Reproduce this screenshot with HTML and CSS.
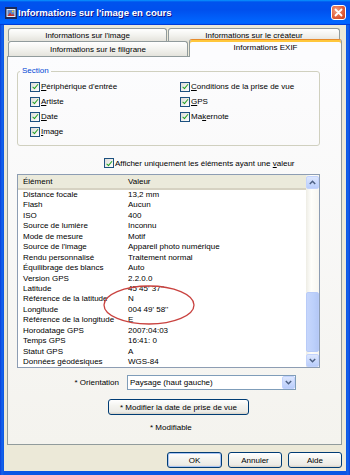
FILE: index.html
```html
<!DOCTYPE html>
<html lang="fr">
<head>
    <meta charset="UTF-8">
    <title>Informations sur l'image en cours</title>
    <link rel="stylesheet" href="styles.css">
</head>
<body>
    <div class="window">
        <!-- barre de titre -->
        <div class="titlebar">
            <svg class="app-icon" width="12" height="12" viewBox="0 0 12 12">
                <rect x="0" y="0" width="12" height="12" fill="#1b2a5a"/>
                <rect x="1.5" y="2" width="9" height="8" fill="#e8eef8"/>
                <rect x="2.5" y="3" width="7" height="6" fill="#5b86c9"/>
                <path d="M2.5 9 L5 5.5 L7 8 L8 6.5 L9.5 9 Z" fill="#c8322a"/>
                <circle cx="7.8" cy="4.4" r="0.9" fill="#f5d23c"/>
            </svg>
            <span class="title">Informations sur l'image en cours</span>
            <div class="close">
                <svg width="13" height="13" viewBox="0 0 13 13">
                    <path d="M3.5 3.5 L9.5 9.5 M9.5 3.5 L3.5 9.5" stroke="#fff" stroke-width="1.8" stroke-linecap="round"/>
                </svg>
            </div>
        </div>

        <div class="client">
            <div class="tab-row row-top">
                <div class="tab tab-image">Informations sur l'image</div>
                <div class="tab tab-creator">Informations sur le créateur</div>
            </div>
            <div class="tab-row row-bottom">
                <div class="tab tab-watermark">Informations sur le filigrane</div>
                <div class="tab tab-exif active">Informations EXIF</div>
            </div>

            <div class="panel">
                <fieldset class="section">
                    <legend>Section</legend>
                    <div class="check-grid">
                        <label class="check"><span class="box"></span><span><u>P</u>ériphérique d'entrée</span></label>
                        <label class="check"><span class="box"></span><span><u>C</u>onditions de la prise de vue</span></label>
                        <label class="check"><span class="box"></span><span><u>A</u>rtiste</span></label>
                        <label class="check"><span class="box"></span><span><u>G</u>PS</span></label>
                        <label class="check"><span class="box"></span><span><u>D</u>ate</span></label>
                        <label class="check"><span class="box"></span><span>Ma<u>k</u>ernote</span></label>
                        <label class="check"><span class="box"></span><span><u>I</u>mage</span></label>
                    </div>
                </fieldset>

                <label class="check only-values"><span class="box"></span><span>Afficher uniquement les éléments ayant une <u>v</u>aleur</span></label>

                <div class="list">
                    <div class="list-main">
                        <div class="list-head"><span>Élément</span><span>Valeur</span></div>
                        <div class="row"><span>Distance focale</span><span>13,2 mm</span></div>
                        <div class="row"><span>Flash</span><span>Aucun</span></div>
                        <div class="row"><span>ISO</span><span>400</span></div>
                        <div class="row"><span>Source de lumière</span><span>Inconnu</span></div>
                        <div class="row"><span>Mode de mesure</span><span>Motif</span></div>
                        <div class="row"><span>Source de l'image</span><span>Appareil photo numérique</span></div>
                        <div class="row"><span>Rendu personnalisé</span><span>Traitement normal</span></div>
                        <div class="row"><span>Équilibrage des blancs</span><span>Auto</span></div>
                        <div class="row"><span>Version GPS</span><span>2.2.0.0</span></div>
                        <div class="row"><span>Latitude</span><span>45 45' 37''</span></div>
                        <div class="row"><span>Référence de la latitude</span><span>N</span></div>
                        <div class="row"><span>Longitude</span><span>004 49' 58''</span></div>
                        <div class="row"><span>Référence de la longitude</span><span>E</span></div>
                        <div class="row"><span>Horodatage GPS</span><span>2007:04:03</span></div>
                        <div class="row"><span>Temps GPS</span><span>16:41: 0</span></div>
                        <div class="row"><span>Statut GPS</span><span>A</span></div>
                        <div class="row"><span>Données géodésiques</span><span>WGS-84</span></div>
                    </div>
                    <div class="scrollbar">
                        <div class="sb-btn">
                            <svg width="7" height="5" viewBox="0 0 7 5"><path d="M0.8 4 L3.5 1.3 L6.2 4" fill="none" stroke="#4d6185" stroke-width="1.5"/></svg>
                        </div>
                        <div class="sb-thumb"></div>
                        <div class="sb-btn">
                            <svg width="7" height="5" viewBox="0 0 7 5"><path d="M0.8 1 L3.5 3.7 L6.2 1" fill="none" stroke="#4d6185" stroke-width="1.5"/></svg>
                        </div>
                    </div>
                    <!-- cercle rouge dessiné par-dessus la liste -->
                    <svg class="mark" width="92" height="40" viewBox="0 0 92 40">
                        <ellipse cx="46" cy="20" rx="45" ry="19" fill="none" stroke="#c9423f" stroke-width="1.3"/>
                    </svg>
                </div>

                <div class="orient">
                    <span class="orient-label">* Orientation</span>
                    <div class="combo">
                        <span>Paysage (haut gauche)</span>
                        <div class="combo-btn">
                            <svg width="7" height="5" viewBox="0 0 7 5"><path d="M0.8 1 L3.5 3.7 L6.2 1" fill="none" stroke="#4d6185" stroke-width="1.5"/></svg>
                        </div>
                    </div>
                </div>

                <div class="btn btn-date">* Modifier la date de prise de vue</div>
                <div class="note">* Modifiable</div>
            </div>

            <div class="actions">
                <div class="btn btn-ok">OK</div>
                <div class="btn btn-cancel">Annuler</div>
                <div class="btn btn-help">Aide</div>
            </div>
        </div>
    </div>
</body>
</html>
```

FILE: styles.css
```css
* {
    box-sizing: border-box;
}
body {
    margin: 0;
    font-family: "Liberation Sans", Arial, sans-serif;
    font-size: 8px;
    color: #000;
}
.window {
    width: 350px;
    height: 475px;
    display: flex;
    flex-direction: column;
    background: linear-gradient(90deg, #0a3fd8, #1464ec 2px, #0a55e4 4px, #0a55e4 346px, #1464ec 348px, #0a3fd8);
}

/* barre de titre */
.titlebar {
    height: 25px;
    display: flex;
    align-items: center;
    padding: 0 4px 0 5px;
    background: linear-gradient(180deg, #0997ff, #0053ee 8%, #0050ee 40%, #06f 88%, #06f 93%, #005bff 95%, #003dd7 96%, #003dd7);
}
.app-icon {
    flex: none;
}
.title {
    flex: 1;
    margin-left: 1px;
    color: #fff;
    font-weight: bold;
    font-size: 9.6px;
    text-shadow: 1px 1px #0f1089;
}
.close {
    width: 15px;
    height: 15px;
    border: 1px solid #fff;
    border-radius: 3px;
    background: radial-gradient(circle at 35% 35%, #f2a184, #e0603c 55%, #c63b18);
    display: flex;
    align-items: center;
    justify-content: center;
}

/* zone cliente */
.client {
    flex: 1;
    margin: 0 4px 4px;
    padding: 3px 4px 3px 3px;
    background: #ece9d8;
    display: flex;
    flex-direction: column;
}
.tab-row {
    display: flex;
    gap: 1px;
    margin-left: 1px;
}
.row-top {
    height: 13px;
}
.row-bottom {
    height: 15px;
    align-items: flex-end;
}
.tab {
    height: 100%;
    border: 1px solid #919b9c;
    border-bottom: none;
    border-radius: 3px 3px 0 0;
    background: linear-gradient(#fff, #f3f3ef 50%, #e4e3dc);
    display: flex;
    align-items: center;
    justify-content: center;
}
.tab-image { width: 159px; }
.tab-creator { width: 172px; }
.tab-watermark { width: 180px; }
.tab-exif { width: 153px; }
.tab.active {
    height: 18px;
    margin-bottom: -1px;
    padding-bottom: 3px;
    border-top: 1px solid #e68b2c;
    box-shadow: inset 0 2px #ffc73c;
    background: #fcfcfe;
    position: relative;
    z-index: 1;
}

.panel {
    flex: 1;
    border: 1px solid #919b9c;
    background: linear-gradient(#fcfcfe, #f4f3ee);
    padding-left: 9px;
}

/* groupe Section */
.section {
    margin: 9px 0 0;
    width: 303px;
    border: 1px solid #d0d0bf;
    border-radius: 3px;
    padding: 3px 0 6px 12px;
}
.section legend {
    margin-left: -10px;
    padding: 0 2px;
    line-height: 10px;
    color: #0046d5;
}
.check-grid {
    display: grid;
    grid-template-columns: 150px 1fr;
    grid-auto-rows: 15px;
}
.check {
    display: flex;
    align-items: center;
}
.box {
    flex: none;
    width: 10px;
    height: 10px;
    margin-right: 1px;
    border: 1px solid #1c5180;
    background: linear-gradient(135deg, #dcdcd7, #fff);
    position: relative;
}
.box::after {
    content: '';
    position: absolute;
    left: 2.5px;
    top: 0.5px;
    width: 2px;
    height: 4.5px;
    border: solid #21a121;
    border-width: 0 1.5px 1.5px 0;
    transform: rotate(40deg);
}
.only-values {
    margin: 10px 0 0 87px;
    height: 14px;
}

/* liste EXIF */
.list {
    margin-top: 4px;
    width: 303px;
    height: 194px;
    border: 1px solid #8d9db3;
    background: #fff;
    display: flex;
    position: relative;
}
.list-main {
    flex: 1;
}
.list-head,
.row {
    display: grid;
    grid-template-columns: 110px 1fr;
}
.list-head span:first-child,
.row span:first-child {
    padding-left: 5px;
    white-space: nowrap;
}
.list-head {
    height: 15px;
    align-items: center;
    background: #ebeadb;
    border-bottom: 2px solid #d6d2c2;
}
.row {
    height: 10.45px;
    line-height: 10.45px;
}
.scrollbar {
    width: 13px;
    display: flex;
    flex-direction: column;
    background: linear-gradient(90deg, #eeede5, #fefefb 40%, #f7f6f1);
}
.sb-btn {
    height: 13px;
    margin-top: 1px;
    border: 1px solid #c3d3fd;
    border-radius: 2px;
    background: linear-gradient(#dde7fe, #b9cdfb);
    display: flex;
    align-items: center;
    justify-content: center;
}
.sb-thumb {
    margin-top: auto;
    margin-bottom: 1px;
    height: 60px;
    border: 1px solid #b8cbf8;
    border-radius: 2px;
    background: linear-gradient(90deg, #c6d6fc, #bcd0fb 60%, #b4c8f6);
}
.mark {
    position: absolute;
    left: 85px;
    top: 110px;
}

/* orientation */
.orient {
    margin-top: 7px;
    height: 15px;
    display: flex;
    align-items: center;
}
.orient-label {
    width: 102px;
    text-align: right;
}
.combo {
    margin-left: 8px;
    width: 169px;
    height: 15px;
    border: 1px solid #7f9db9;
    background: #fff;
    display: flex;
    align-items: center;
    padding: 0 0 0 2px;
}
.combo-btn {
    margin-left: auto;
    width: 13px;
    height: 13px;
    border: 1px solid #c3d3fd;
    border-radius: 2px;
    background: linear-gradient(#dde7fe, #b9cdfb);
    display: flex;
    align-items: center;
    justify-content: center;
}

/* boutons */
.btn {
    height: 16px;
    border: 1px solid #003c74;
    border-radius: 3px;
    background: linear-gradient(180deg, #fff, #f4f4f0 40%, #ecebe6 85%, #d6d0c5);
    display: flex;
    align-items: center;
    justify-content: center;
}
.btn-date {
    margin: 9px 0 0 91px;
    width: 141px;
}
.note {
    margin: 8px 0 0 133px;
    line-height: 10px;
}
.actions {
    margin-top: 7px;
    display: flex;
    justify-content: flex-end;
    gap: 6px;
}
.btn-ok {
    width: 55px;
    box-shadow: inset 0 0 0 1px #aac5f3;
}
.btn-cancel,
.btn-help {
    width: 54px;
}
```
